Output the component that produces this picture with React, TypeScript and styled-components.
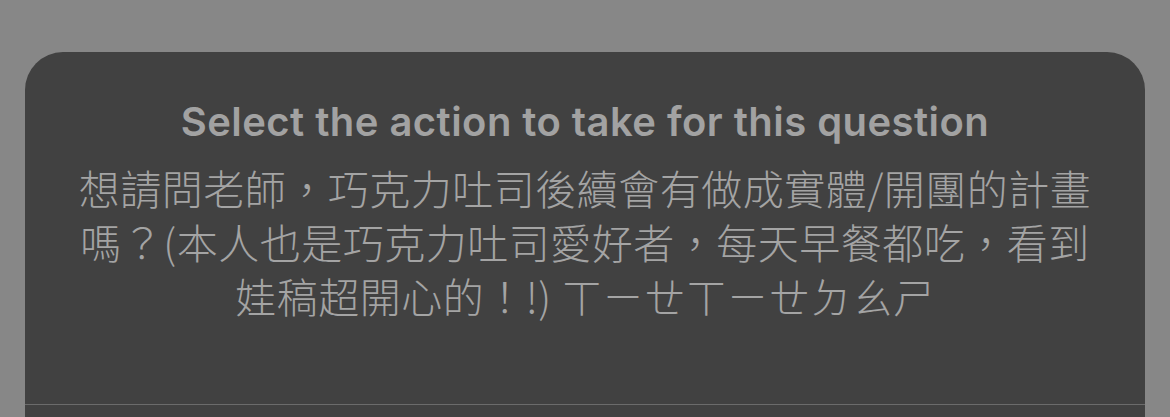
import styled, { createGlobalStyle } from "styled-components";

const GlobalStyle = createGlobalStyle`
  html, body {
    margin: 0;
    padding: 0;
    background: #878787;
    overflow: hidden;
  }
  body {
    font-family: "Inter", "Noto Sans CJK TC", sans-serif;
  }
`;

const Screen = styled.div`
  width: 1170px;
  height: 417px;
  padding: 52px 25px 0;
  box-sizing: border-box;
`;

const Sheet = styled.div`
  width: 1120px;
  height: 365px;
  background: #414141;
  border-radius: 38px 38px 0 0;
  display: flex;
  flex-direction: column;
`;

const Header = styled.div`
  height: 353px;
  flex-shrink: 0;
  box-sizing: border-box;
  padding: 46px 40px 0;
  display: flex;
  flex-direction: column;
  align-items: center;
  text-align: center;
  border-bottom: 1px solid #6b6b6b;
`;

const Title = styled.h2`
  margin: 0;
  font-family: "Inter", "Liberation Sans", sans-serif;
  font-size: 40px;
  line-height: 48px;
  font-weight: 600;
  letter-spacing: 0.45px;
  color: #a2a2a2;
`;

const Question = styled.p`
  margin: 14px 0 0;
  max-width: 1030px;
  font-family: "Noto Sans CJK TC", "Noto Sans", sans-serif;
  font-size: 41px;
  line-height: 54px;
  font-weight: 300;
  letter-spacing: 0.5px;
  color: #a4a4a4;
`;

export default function App() {
  return (
    <Screen>
      <GlobalStyle />
      <Sheet>
        <Header>
          <Title>Select the action to take for this question</Title>
          <Question>
            想請問老師，巧克力吐司後續會有做成實體/開團的計畫嗎？(本人也是巧克力吐司愛好者，每天早餐都吃，看到娃稿超開心的！!) ㄒㄧㄝㄒㄧㄝㄉㄠㄕ
          </Question>
        </Header>
      </Sheet>
    </Screen>
  );
}
